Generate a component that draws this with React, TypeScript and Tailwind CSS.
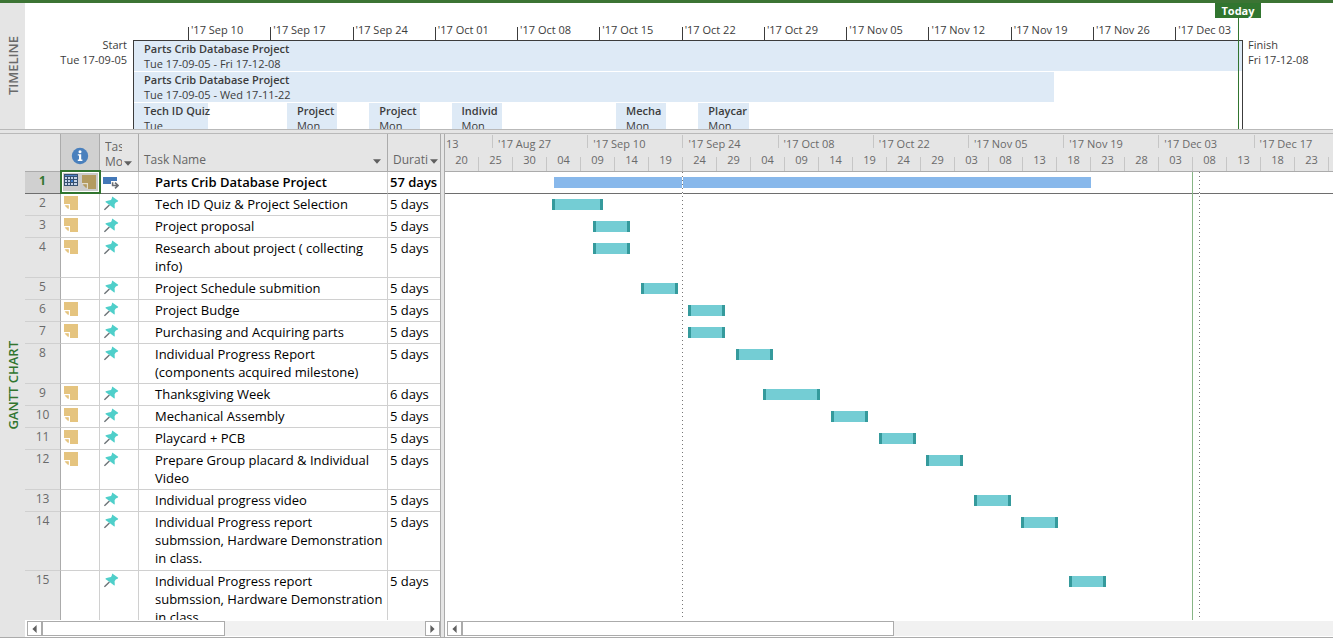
import type { ReactNode } from "react";

type Task = {
  id: number;
  name: string;
  duration: string;
  lines: 1 | 2 | 3;
  note: boolean;
  start: number;
  length: number;
};

const TASKS: Task[] = [
  { id: 1, name: "Parts Crib Database Project", duration: "57 days", lines: 1, note: true, start: 109, length: 537 },
  { id: 2, name: "Tech ID Quiz & Project Selection", duration: "5 days", lines: 1, note: true, start: 107, length: 51 },
  { id: 3, name: "Project proposal", duration: "5 days", lines: 1, note: true, start: 148, length: 37 },
  { id: 4, name: "Research about project ( collecting\ninfo)", duration: "5 days", lines: 2, note: true, start: 148, length: 37 },
  { id: 5, name: "Project Schedule submition", duration: "5 days", lines: 1, note: false, start: 196, length: 37 },
  { id: 6, name: "Project Budge", duration: "5 days", lines: 1, note: true, start: 243, length: 37 },
  { id: 7, name: "Purchasing and Acquiring parts", duration: "5 days", lines: 1, note: true, start: 243, length: 37 },
  { id: 8, name: "Individual Progress Report\n(components acquired milestone)", duration: "5 days", lines: 2, note: false, start: 291, length: 37 },
  { id: 9, name: "Thanksgiving Week", duration: "6 days", lines: 1, note: true, start: 318, length: 57 },
  { id: 10, name: "Mechanical Assembly", duration: "5 days", lines: 1, note: true, start: 386, length: 37 },
  { id: 11, name: "Playcard + PCB", duration: "5 days", lines: 1, note: true, start: 434, length: 37 },
  { id: 12, name: "Prepare Group placard & Individual\nVideo", duration: "5 days", lines: 2, note: true, start: 481, length: 37 },
  { id: 13, name: "Individual progress video", duration: "5 days", lines: 1, note: false, start: 529, length: 37 },
  { id: 14, name: "Individual Progress report\nsubmssion, Hardware Demonstration\nin class.", duration: "5 days", lines: 3, note: false, start: 576, length: 37 },
  { id: 15, name: "Individual Progress report\nsubmssion, Hardware Demonstration\nin class.", duration: "5 days", lines: 3, note: false, start: 624, length: 37 },
];

const ROW_HEIGHT = { 1: "h-[22px]", 2: "h-[40px]", 3: "h-[59px]" };

const WEEKS = ["Sep 10", "Sep 17", "Sep 24", "Oct 01", "Oct 08", "Oct 15", "Oct 22", "Oct 29", "Nov 05", "Nov 12", "Nov 19", "Nov 26", "Dec 03"];

const FORTNIGHTS = ["Aug 27", "Sep 10", "Sep 24", "Oct 08", "Oct 22", "Nov 05", "Nov 19", "Dec 03", "Dec 17"];

const DAYS = ["20", "25", "30", "04", "09", "14", "19", "24", "29", "04", "09", "14", "19", "24", "29", "03", "08", "13", "18", "23", "28", "03", "08", "13", "18", "23"];

const DAY_WIDTH = 6.8;

// Share of the timeline's width: gap before the card, and the card itself.
const CARDS = [
  { title: "Tech ID Quiz", day: "Tue", gap: 0, width: 6.7 },
  { title: "Project", day: "Mon", gap: 7.1, width: 4.55 },
  { title: "Project", day: "Mon", gap: 2.88, width: 4.55 },
  { title: "Individ", day: "Mon", gap: 2.88, width: 4.55 },
  { title: "Mecha", day: "Mon", gap: 10.3, width: 4.55 },
  { title: "Playcar", day: "Mon", gap: 2.88, width: 4.55 },
];

function NoteIcon({ selected = false }: { selected?: boolean }) {
  const paper = selected ? "#b39b60" : "#e5c47f";
  const fold = selected ? "#e2dccb" : "#ffffff";
  return (
    <svg width="14" height="14" viewBox="0 0 14 14" className="shrink-0" aria-hidden="true">
      <path d="M0 0h14v14H6L0 8.5z" fill={paper} />
      <path d="M0 8.6h5.4V14" fill="none" stroke={fold} strokeWidth="1.2" />
      <path d="M.8 9.8H4.3v3.4z" fill={paper} />
    </svg>
  );
}

function CalendarIcon() {
  return (
    <svg width="14" height="12" viewBox="0 0 14 12" className="mb-1 shrink-0" aria-hidden="true">
      <rect width="14" height="12" fill="#35506f" />
      <rect x="1" y="1" width="12" height="1" fill="#4f83c4" />
      {[3, 6, 9].map((y) =>
        [1, 4, 7, 10].map((x) => (
          <rect key={`${x}-${y}`} x={x} y={y} width={x === 10 ? 3 : 2} height="2" fill={x === 7 && y === 6 ? "#3f7fd0" : "#c3d3e8"} />
        )),
      )}
    </svg>
  );
}

function PinIcon() {
  return (
    <svg width="15" height="15" viewBox="0 0 15 15" aria-hidden="true">
      <path d="M.4 13.8 5.4 9" stroke="#6d7478" strokeWidth="1.5" />
      <path d="M8.2.4 14.2 4.8 14 5.6 11.8 6.4 10.6 8.2 10.8 12.2 10.2 12.6 6.6 9.8 1.4 6 1.8 5.2 4.6 4.4 7 4 7.8 2.6z" fill="#4fcfca" />
    </svg>
  );
}

function AutoIcon() {
  return (
    <svg width="16" height="12" viewBox="0 0 16 12" aria-hidden="true">
      <path d="M0 0h14v4H8v3H0z" fill="#4478b8" />
      <path d="M9.6 5.2v3.3h5M12 5.6l3 2.9-3 2.9" fill="none" stroke="#6b6f75" strokeWidth="1.6" />
    </svg>
  );
}

function InfoIcon() {
  return (
    <svg width="18" height="18" viewBox="0 0 18 18" role="img" aria-label="Indicators">
      <circle cx="9" cy="9" r="8.2" fill="#4a80bd" />
      <circle cx="9" cy="4.7" r="1.5" fill="#fff" />
      <path d="M6.8 7.2h3.4v5.4h1.2V14H6.8v-1.4H8V8.5H6.8z" fill="#fff" />
    </svg>
  );
}

function DownArrow({ label }: { label: string }) {
  return (
    <button type="button" aria-label={label} className="flex h-3 w-3 shrink-0 items-center justify-center">
      <svg width="8" height="5" viewBox="0 0 8 5" aria-hidden="true">
        <path d="M0 .3h8L4 4.7z" fill="#5f5f5f" />
      </svg>
    </button>
  );
}

function ScrollButton({ label, path }: { label: string; path: string }) {
  return (
    <button type="button" aria-label={label} className="flex h-[15px] w-[15px] shrink-0 items-center justify-center border border-[#ababab] bg-white">
      <svg width="5" height="8" viewBox="0 0 5 8" aria-hidden="true">
        <path d={path} fill="#606060" />
      </svg>
    </button>
  );
}

const LEFT = "M4.6 0v8L.4 4z";
const RIGHT = "M.4 0v8l4.2-4z";

function SideTab({ children, className }: { children: ReactNode; className: string }) {
  return (
    <div className={`flex w-[25px] shrink-0 items-center justify-center bg-[#e5e5e5] font-semibold ${className}`}>
      <h2 className="rotate-180 whitespace-nowrap text-[13px] leading-4 [writing-mode:vertical-rl]">{children}</h2>
    </div>
  );
}

function Timeline() {
  return (
    <section className="flex h-[126px] shrink-0 overflow-hidden bg-white text-[11px] leading-[15px] text-[#3c3c3c]">
      <SideTab className="text-[#6a6a6a]">TIMELINE</SideTab>
      <div className="w-[108px] shrink-0 pt-[34px] pr-[6px] text-right">
        <p>Start</p>
        <p>Tue 17-09-05</p>
      </div>
      <div className="relative flex min-w-0 flex-1 flex-col">
        <div className="flex h-[37px] shrink-0 items-end overflow-hidden pl-[4.95%]">
          {WEEKS.map((week) => (
            <div key={week} className="h-[13px] w-[7.8%] shrink-0 border-l border-[#3c3c3c] pl-[2px] whitespace-nowrap">
              <span className="-mt-[5px] block">'17 {week}</span>
            </div>
          ))}
        </div>
        <div className="flex-1 border border-b-0 border-[#3c3c3c]">
          <div className="h-[30px] bg-[#deeaf6] pl-[10px]">
            <p className="font-semibold">Parts Crib Database Project</p>
            <p>Tue 17-09-05 - Fri 17-12-08</p>
          </div>
          <div className="mt-px h-[30px] w-[83%] bg-[#deeaf6] pl-[10px]">
            <p className="font-semibold">Parts Crib Database Project</p>
            <p>Tue 17-09-05 - Wed 17-11-22</p>
          </div>
          <div className="mt-px flex h-[30px]">
            {CARDS.map((card, i) => (
              <div key={i} className="shrink-0 bg-[#deeaf6] pl-[10px] whitespace-nowrap" style={{ marginLeft: `${card.gap}%`, width: `${card.width}%` }}>
                <p className="font-semibold">{card.title}</p>
                <p>{card.day}</p>
              </div>
            ))}
          </div>
        </div>
        <div className="absolute inset-y-0 right-1 w-px bg-[#31752f]" />
        <div className="absolute top-0 -right-[18px] flex h-[15px] w-[46px] items-center justify-center bg-[#31752f] font-bold text-white">Today</div>
      </div>
      <div className="w-[90px] shrink-0 pt-[34px] pl-[5px]">
        <p>Finish</p>
        <p>Fri 17-12-08</p>
      </div>
    </section>
  );
}

function TaskTable() {
  return (
    <div className="flex w-[416px] shrink-0 flex-col border-r border-[#ababab] bg-white">
      <div className="min-h-0 flex-1 overflow-hidden">
        <table className="w-full table-fixed border-separate border-spacing-0">
          <colgroup>
            <col className="w-9" />
            <col className="w-[39px]" />
            <col className="w-[39px]" />
            <col />
            <col className="w-[52px]" />
          </colgroup>
          <thead>
            <tr className="h-[38px] bg-[#e5e5e5] text-left text-[12px] leading-[15px] text-[#666] *:border-b *:border-[#ababab] *:p-0 *:font-normal">
              <th aria-label="Row number" className="border-r border-r-[#c6c6c6]" />
              <th className="border-r border-r-[#c6c6c6] bg-[#d0d0d0]">
                <div className="flex justify-center pt-[6px]"><InfoIcon /></div>
              </th>
              <th className="border-r border-r-[#c6c6c6] align-bottom">
                <div className="flex items-end pb-[2px] pl-[5px]">
                  <span className="h-[30px] w-[17px] overflow-hidden">Task Mode</span>
                  <DownArrow label="Task mode options" />
                </div>
              </th>
              <th className="border-r border-r-[#c6c6c6] align-bottom">
                <div className="flex items-end justify-between pr-1 pb-1 pl-[5px]">
                  Task Name
                  <DownArrow label="Task name options" />
                </div>
              </th>
              <th className="align-bottom">
                <div className="flex items-end pb-1 pl-[5px]">
                  <span className="w-[35px] overflow-hidden">Duration</span>
                  <DownArrow label="Duration options" />
                </div>
              </th>
            </tr>
          </thead>
          <tbody className="text-[13px] leading-[18px] text-black">
            {TASKS.map((task) => {
              const summary = task.id === 1;
              return (
                <tr
                  key={task.id}
                  className={`${ROW_HEIGHT[task.lines]} align-top *:border-b *:p-0 ${summary ? "font-semibold *:border-b-[#6e6e6e]" : "*:border-b-[#d0d0d0]"}`}
                >
                  <th
                    scope="row"
                    className={`border-r border-r-[#ababab] text-center text-[12px] leading-[18px] ${summary ? "bg-[#d0d0d0] font-bold text-[#31752f]" : "bg-[#e5e5e5] font-normal text-[#6a6a6a]"}`}
                  >
                    {task.id}
                  </th>
                  <td className={`border-r border-r-[#d0d0d0] ${summary ? "relative" : ""}`}>
                    {summary ? (
                      <div className="absolute -top-[2px] -left-[1px] flex h-6 w-[41px] items-center gap-1 border-2 border-[#31752f] bg-[#cbcbcb] pl-[2px] inset-ring inset-ring-white">
                        <CalendarIcon />
                        <NoteIcon selected />
                      </div>
                    ) : (
                      task.note && <div className="pt-[2px] pl-[3px]"><NoteIcon /></div>
                    )}
                  </td>
                  <td className="border-r border-r-[#d0d0d0]">
                    <div className={summary ? "pt-[5px] pl-[3px]" : "pt-[2px] pl-[4px]"}>{summary ? <AutoIcon /> : <PinIcon />}</div>
                  </td>
                  <td className="border-r border-r-[#d0d0d0]">
                    <div className="h-0 pt-px pl-4 whitespace-pre">{task.name}</div>
                  </td>
                  <td>
                    <div className="pt-px pl-[2px] whitespace-nowrap">{task.duration}</div>
                  </td>
                </tr>
              );
            })}
          </tbody>
        </table>
      </div>
      <div className="flex h-[17px] shrink-0 items-center bg-white pl-[2px]">
        <ScrollButton label="Scroll table left" path={LEFT} />
        <div className="flex flex-1 bg-[#f1f1f1]">
          <div className="h-[15px] w-[183px] border border-[#ababab] bg-white" />
        </div>
        <ScrollButton label="Scroll table right" path={RIGHT} />
      </div>
    </div>
  );
}

function GanttChart() {
  return (
    <div className="flex min-w-0 flex-1 flex-col border-l border-[#ababab] bg-white">
      <div className="relative min-h-0 flex-1 overflow-hidden">
        <div className="h-[38px] border-b border-[#ababab] bg-[#e5e5e5] text-[11px] leading-[18px] text-[#6a6a6a]">
          <div className="flex h-[18px] whitespace-nowrap">
            <div className="shrink-0 pt-px pl-px" style={{ width: Math.round(DAY_WIDTH * 7) - 1 }}>13</div>
            {FORTNIGHTS.map((label) => (
              <div key={label} className="shrink-0 pt-px" style={{ width: DAY_WIDTH * 14 }}>
                <div className="h-[13px] border-l border-[#c6c6c6] pl-[5px]">
                  <span className="block">'17 {label}</span>
                </div>
              </div>
            ))}
          </div>
          <div className="flex h-[19px] items-end">
            {DAYS.map((day, i) => (
              <div key={i} className="h-[14px] w-[34px] shrink-0 border-r border-[#c6c6c6] text-center">
                <span className="-mt-[6px] block">{day}</span>
              </div>
            ))}
          </div>
        </div>
        {TASKS.map((task) => (
          <div key={task.id} className={`${ROW_HEIGHT[task.lines]} pt-[5px] ${task.id === 1 ? "border-b border-[#6e6e6e]" : ""}`}>
            <div
              className={`h-[11px] ${task.id === 1 ? "bg-[#88b8eb]" : "border-x-[3px] border-[#359a9c] bg-[#74cdd4]"}`}
              style={{ marginLeft: task.start, width: task.length }}
            />
          </div>
        ))}
        <div className="absolute top-[38px] bottom-0 left-[237px] w-px bg-[repeating-linear-gradient(to_bottom,#777_0_1px,#fff_1px_4px)]" />
        <div className="absolute top-[38px] bottom-0 left-[747px] w-px bg-[#86b585]" />
        <div className="absolute top-[38px] bottom-0 left-[754px] w-px bg-[repeating-linear-gradient(to_bottom,#777_0_1px,#fff_1px_4px)]" />
      </div>
      <div className="flex h-[17px] shrink-0 items-center bg-white pl-[2px]">
        <ScrollButton label="Scroll chart left" path={LEFT} />
        <div className="flex flex-1 bg-[#f1f1f1]">
          <div className="h-[15px] w-[432px] border border-[#ababab] bg-white" />
        </div>
      </div>
    </div>
  );
}

export default function App() {
  return (
    <main className="flex h-screen flex-col overflow-hidden border-t-[3px] border-[#3c7434] bg-white font-['Open_Sans','Noto_Sans',sans-serif]">
      <Timeline />
      <div className="h-[5px] shrink-0 border-y border-[#b9b9b9] bg-[#e5e5e5]" />
      <section className="flex min-h-0 flex-1 border-b border-[#ababab] bg-[#e5e5e5]">
        <SideTab className="text-[#31752f]">GANTT CHART</SideTab>
        <TaskTable />
        <div className="w-[3px] shrink-0" />
        <GanttChart />
      </section>
    </main>
  );
}
